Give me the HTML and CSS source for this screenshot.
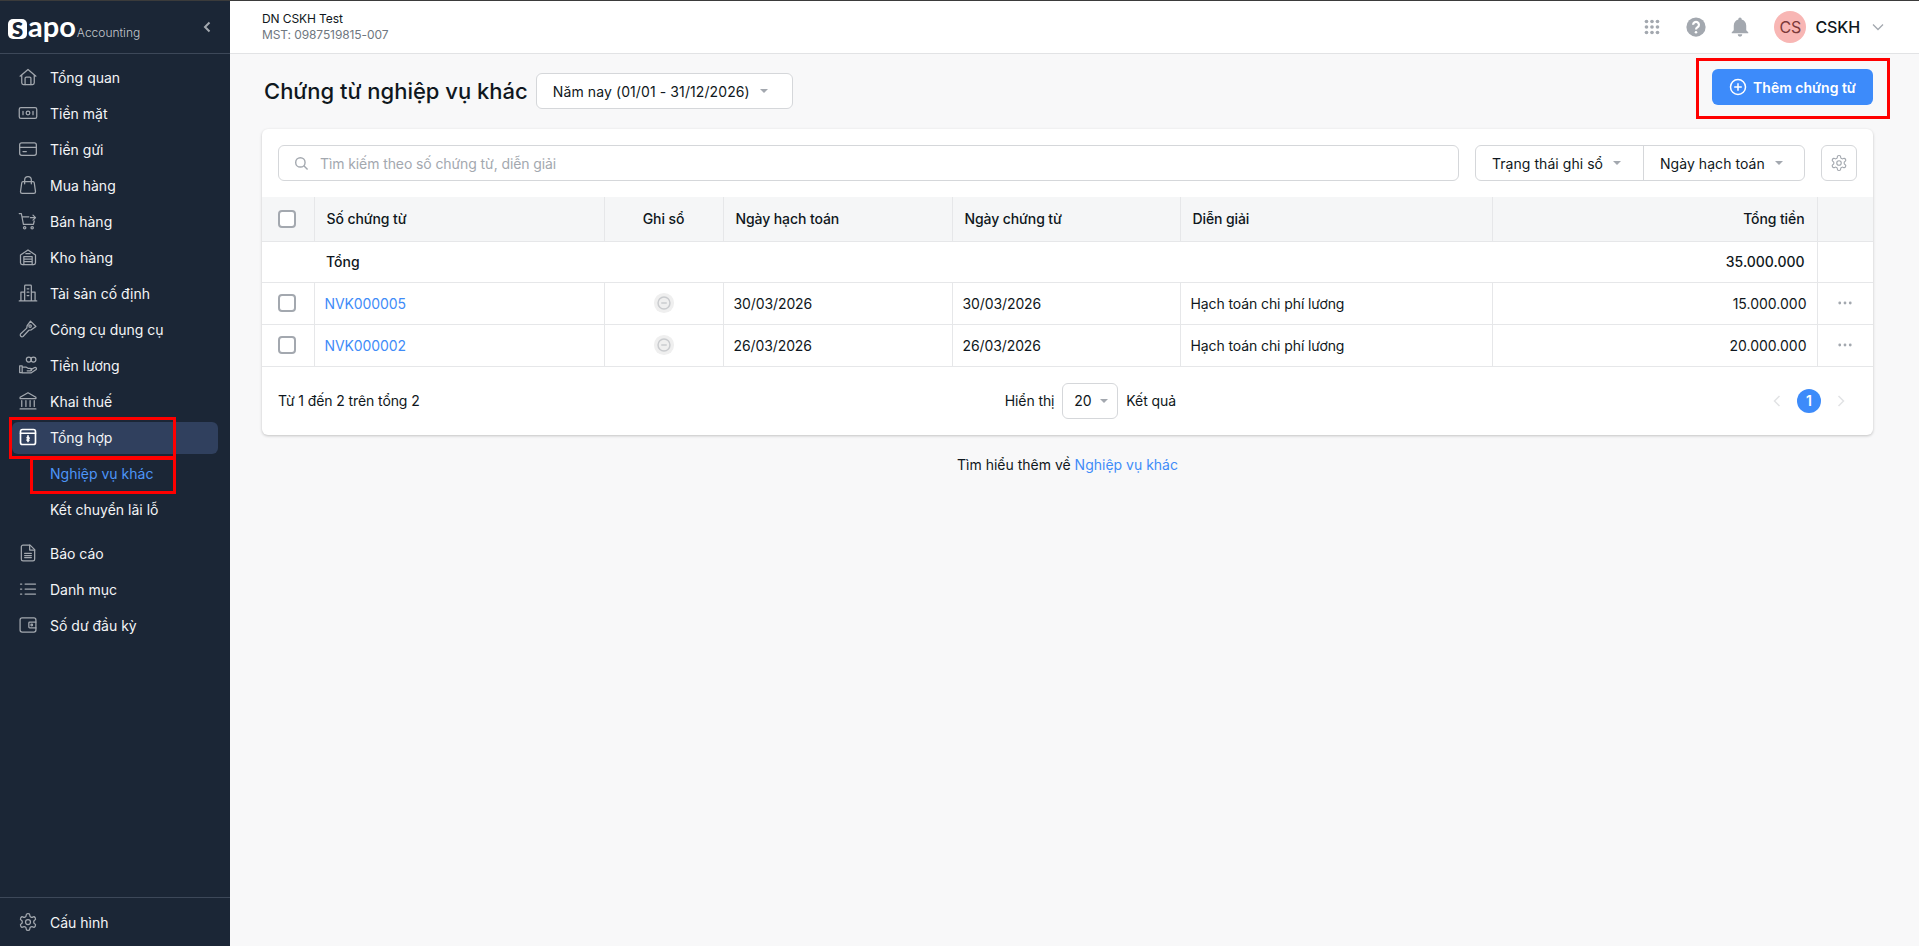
FILE: index.html
```html
<!DOCTYPE html>
<html lang="vi">
<head>
<meta charset="utf-8">
<title>Chứng từ nghiệp vụ khác</title>
<link rel="stylesheet" href="styles.css">
</head>
<body>
<svg class="defs" width="0" height="0" aria-hidden="true">
  <symbol id="gear" viewBox="0 0 24 24">
    <path d="M12.22 2h-.44a2 2 0 0 0-2 2v.18a2 2 0 0 1-1 1.73l-.43.25a2 2 0 0 1-2 0l-.15-.08a2 2 0 0 0-2.73.73l-.22.38a2 2 0 0 0 .73 2.73l.15.1a2 2 0 0 1 1 1.72v.51a2 2 0 0 1-1 1.74l-.15.09a2 2 0 0 0-.73 2.73l.22.38a2 2 0 0 0 2.73.73l.15-.08a2 2 0 0 1 2 0l.43.25a2 2 0 0 1 1 1.73V20a2 2 0 0 0 2 2h.44a2 2 0 0 0 2-2v-.18a2 2 0 0 1 1-1.73l.43-.25a2 2 0 0 1 2 0l.15.08a2 2 0 0 0 2.73-.73l.22-.39a2 2 0 0 0-.73-2.73l-.15-.08a2 2 0 0 1-1-1.74v-.5a2 2 0 0 1 1-1.74l.15-.09a2 2 0 0 0 .73-2.73l-.22-.38a2 2 0 0 0-2.73-.73l-.15.08a2 2 0 0 1-2 0l-.43-.25a2 2 0 0 1-1-1.73V4a2 2 0 0 0-2-2z"/>
    <circle cx="12" cy="12" r="3"/>
  </symbol>
  <symbol id="status" viewBox="0 0 24 24">
    <circle cx="12" cy="12" r="11" fill="#efefef" stroke="none"/>
    <circle cx="12" cy="12" r="6.5" fill="none" stroke="#c9cbce" stroke-width="1.6"/>
    <path d="M9 12h6" fill="none" stroke="#c9cbce" stroke-width="1.6"/>
  </symbol>
  <symbol id="dots" viewBox="0 0 16 4">
    <circle cx="2" cy="2" r="1.6"/><circle cx="8" cy="2" r="1.6"/><circle cx="14" cy="2" r="1.6"/>
  </symbol>
</svg>
<div class="app">
  <aside class="sidebar">
    <div class="brand">
      <div class="logo"><span class="logo-s">S</span><span class="logo-apo">apo</span><span class="logo-sub">Accounting</span></div>
      <svg class="collapse" viewBox="0 0 10 14"><path d="M7.5 2.5 3 7l4.500 4.500"/></svg>
    </div>
    <nav class="menu">
      <a class="item"><svg class="ico" viewBox="0 0 24 24"><path d="M2.500 11 12 3l9.500 8M4.500 9.500V19a2 2 0 0 0 2 2h11a2 2 0 0 0 2-2V9.500"/><path d="M8.500 21v-7.500a1.500 1.500 0 0 1 1.500-1.500h4a1.500 1.500 0 0 1 1.500 1.500V21"/></svg>Tổng quan</a>
      <a class="item"><svg class="ico" viewBox="0 0 24 24"><rect x="1.500" y="5.500" width="21" height="13" rx="2"/><circle cx="12" cy="12" r="2.200"/><path d="M6 10v4M18 10v4"/></svg>Tiền mặt</a>
      <a class="item"><svg class="ico" viewBox="0 0 24 24"><rect x="2" y="4.500" width="20" height="15" rx="2.500"/><path d="M2 10h20M6 15h4"/></svg>Tiền gửi</a>
      <a class="item"><svg class="ico" viewBox="0 0 24 24"><path d="M6 8h12a1.500 1.500 0 0 1 1.500 1.300L21 20a2 2 0 0 1-2 2H5a2 2 0 0 1-2-2L4.500 9.300A1.500 1.500 0 0 1 6 8z"/><path d="M8 10.500V6a4 4 0 0 1 8 0v4.500"/></svg>Mua hàng</a>
      <a class="item"><svg class="ico" viewBox="0 0 24 24"><path d="M1.500 3H4l2.500 13h12l1-4M5 7h8"/><path d="M17 5l3 3-3 3M14 8h6" transform="translate(1 0)"/><circle cx="8" cy="20" r="1.400"/><circle cx="17" cy="20" r="1.400"/></svg>Bán hàng</a>
      <a class="item"><svg class="ico" viewBox="0 0 24 24"><path d="M3 9.500 12 3.500l9 6V19a2 2 0 0 1-2 2H5a2 2 0 0 1-2-2z"/><path d="M7 21v-9.500h10V21M7 14.500h10M7 17.500h10M9.500 8h5"/></svg>Kho hàng</a>
      <a class="item"><svg class="ico" viewBox="0 0 24 24"><path d="M1.500 21.500h21M8 21.500V3.500a1 1 0 0 1 1-1h6a1 1 0 0 1 1 1v18M8 11H3.500v10.500M16 11h4.500v10.500"/><path d="M11 7h2M11 11h2M11 15h2"/></svg>Tài sản cố định</a>
      <a class="item"><svg class="ico" viewBox="0 0 24 24"><path d="M15 2.500 21.500 9l-5.500 4-3 .5L6 21a2.200 2.200 0 0 1-3-3l7.500-7 .5-3z"/><circle cx="14.500" cy="8.500" r="1.500"/></svg>Công cụ dụng cụ</a>
      <a class="item"><svg class="ico" viewBox="0 0 24 24"><circle cx="13" cy="5.500" r="3"/><circle cx="18.500" cy="5.500" r="3"/><path d="M2 13h3v8H2zM5 14.500h4.500l2.500 1.500h3a1.500 1.500 0 0 1 0 3H11M15.500 17.500l4.500-2.500a1.600 1.600 0 0 1 1.800 2.500L15.500 21.500H5"/></svg>Tiền lương</a>
      <a class="item"><svg class="ico" viewBox="0 0 24 24"><path d="M12 2 2.500 7.500v1.500h19V7.500zM4.500 11.500v7M9.500 11.500v7M14.500 11.500v7M19.500 11.500v7M2.500 21.500h19"/></svg>Khai thuế</a>
      <a class="item active"><svg class="ico" viewBox="0 0 24 24"><rect x="3" y="3" width="18" height="18" rx="2.500"/><path d="M3 7.500h18M12 10.500v7"/><path d="M10.500 12.500h3v2h-3M10.500 16h3" stroke-width="1.200"/></svg>Tổng hợp</a>
      <a class="item sub current">Nghiệp vụ khác</a>
      <a class="item sub">Kết chuyển lãi lỗ</a>
      <a class="item spaced"><svg class="ico" viewBox="0 0 24 24"><path d="M6 2.500h8.500L20 8v11.500a2 2 0 0 1-2 2H6a2 2 0 0 1-2-2v-15a2 2 0 0 1 2-2z"/><path d="M14 2.500V8.500h6M8 12.500h8M8 15h8M8 17.500h8"/></svg>Báo cáo</a>
      <a class="item"><svg class="ico" viewBox="0 0 24 24"><path d="M8.500 6H21M8.500 12H21M8.500 18H21M3 6h1.500M3 12h1.500M3 18h1.500"/></svg>Danh mục</a>
      <a class="item"><svg class="ico" viewBox="0 0 24 24"><rect x="2.500" y="3.500" width="19" height="17" rx="2.500"/><path d="M21.500 8.500H14a1 1 0 0 0-1 1v5a1 1 0 0 0 1 1h7.500"/><circle cx="16.500" cy="12" r="1"/></svg>Số dư đầu kỳ</a>
    </nav>
    <div class="side-foot">
      <a class="item"><svg class="ico"><use href="#gear"/></svg>Cấu hình</a>
    </div>
  </aside>
  <div class="main">
    <header class="topbar">
      <div class="org">
        <div class="org-name">DN CSKH Test</div>
        <div class="org-tax">MST: 0987519815-007</div>
      </div>
      <div class="top-actions">
        <svg class="top-ico" viewBox="0 0 24 24"><g class="fill-gray"><circle cx="6" cy="6" r="2"/><circle cx="12" cy="6" r="2"/><circle cx="18" cy="6" r="2"/><circle cx="6" cy="12" r="2"/><circle cx="12" cy="12" r="2"/><circle cx="18" cy="12" r="2"/><circle cx="6" cy="18" r="2"/><circle cx="12" cy="18" r="2"/><circle cx="18" cy="18" r="2"/></g></svg>
        <svg class="top-ico" viewBox="0 0 24 24"><circle class="fill-gray" cx="12" cy="12" r="10.500"/><path class="q-mark" d="M8.800 9.500a3.200 3.200 0 1 1 4.800 2.800c-1 .6-1.600 1.200-1.600 2.400"/><circle class="fill-white" cx="12" cy="17.800" r="1.400"/></svg>
        <svg class="top-ico" viewBox="0 0 24 24"><path class="fill-gray" d="M12 1.500a1.800 1.800 0 0 1 1.800 1.800v.6c3 .8 5 3.300 5 6.600v5l2.200 2.300v1H3v-1l2.200-2.300v-5c0-3.300 2-5.800 5-6.600v-.6A1.800 1.800 0 0 1 12 1.500zM9.500 20h5a2.500 2.500 0 0 1-5 0z"/></svg>
        <div class="user">
          <span class="avatar">CS</span>
          <span class="user-name">CSKH</span>
          <svg class="user-chev" viewBox="0 0 12 8"><path d="M1 1.500 6 6.500l5-5"/></svg>
        </div>
      </div>
    </header>
    <main class="content">
      <div class="page-head">
        <div class="page-title-wrap">
          <h1 class="page-title">Chứng từ nghiệp vụ khác</h1>
          <div class="select date-select">Năm nay (01/01 - 31/12/2026)<i class="caret"></i></div>
        </div>
        <button class="btn-primary"><svg class="plus" viewBox="0 0 18 18"><circle cx="9" cy="9" r="7.500"/><path d="M9 5.200v7.600M5.200 9h7.600"/></svg>Thêm chứng từ</button>
      </div>
      <section class="card">
        <div class="toolbar">
          <label class="search">
            <svg class="search-ico" viewBox="0 0 16 16"><circle cx="6.800" cy="6.800" r="5"/><path d="m10.500 10.500 4 4"/></svg>
            <input class="search-input" type="text" placeholder="Tìm kiếm theo số chứng từ, diễn giải">
          </label>
          <div class="filters">
            <div class="filter filter-status">Trạng thái ghi sổ<i class="caret"></i></div>
            <div class="filter filter-date">Ngày hạch toán<i class="caret"></i></div>
          </div>
          <div class="gear-btn"><svg class="gear-ico"><use href="#gear"/></svg></div>
        </div>
        <table class="grid">
          <colgroup>
            <col class="c1"><col class="c2"><col class="c3"><col class="c4"><col class="c5"><col class="c6"><col class="c7"><col class="c8">
          </colgroup>
          <thead>
            <tr>
              <th class="check"><span class="box"></span></th>
              <th>Số chứng từ</th>
              <th class="center">Ghi sổ</th>
              <th>Ngày hạch toán</th>
              <th>Ngày chứng từ</th>
              <th>Diễn giải</th>
              <th class="right">Tổng tiền</th>
              <th></th>
            </tr>
          </thead>
          <tbody>
            <tr class="total">
              <td class="no-line"></td>
              <td class="total-label" colspan="5">Tổng</td>
              <td class="right total-sum">35.000.000</td>
              <td></td>
            </tr>
            <tr>
              <td class="check"><span class="box"></span></td>
              <td><a class="link">NVK000005</a></td>
              <td class="center"><svg class="status-ico"><use href="#status"/></svg></td>
              <td>30/03/2026</td>
              <td>30/03/2026</td>
              <td>Hạch toán chi phí lương</td>
              <td class="right amount">15.000.000</td>
              <td class="center"><svg class="dots-ico"><use href="#dots"/></svg></td>
            </tr>
            <tr>
              <td class="check"><span class="box"></span></td>
              <td><a class="link">NVK000002</a></td>
              <td class="center"><svg class="status-ico"><use href="#status"/></svg></td>
              <td>26/03/2026</td>
              <td>26/03/2026</td>
              <td>Hạch toán chi phí lương</td>
              <td class="right amount">20.000.000</td>
              <td class="center"><svg class="dots-ico"><use href="#dots"/></svg></td>
            </tr>
          </tbody>
        </table>
        <div class="card-foot">
          <div>Từ 1 đến 2 trên tổng 2</div>
          <div class="page-size">
            <span>Hiển thị</span>
            <div class="select size-select">20<i class="caret"></i></div>
            <span>Kết quả</span>
          </div>
          <div class="pager">
            <span class="pager-arrow"><svg viewBox="0 0 10 14"><path d="M7.500 2 2.500 7l5 5"/></svg></span>
            <span class="pager-num">1</span>
            <span class="pager-arrow"><svg viewBox="0 0 10 14"><path d="M2.500 2l5 5-5 5"/></svg></span>
          </div>
        </div>
      </section>
      <p class="learn">Tìm hiểu thêm về <a class="link">Nghiệp vụ khác</a></p>
    </main>
  </div>
  <div class="mark mark-group"></div>
  <div class="mark mark-sub"></div>
  <div class="mark mark-btn"></div>
</div>
</body>
</html>
```

FILE: styles.css
```css
* { box-sizing: border-box; }
html, body { margin: 0; height: 100%; }
body {
  font-family: Inter, "Noto Sans", sans-serif;
  font-size: 14px;
  letter-spacing: -.1px;
  color: #0f1720;
  overflow: hidden;
}
.defs { position: absolute; }
.app {
  position: relative;
  display: flex;
  height: 946px;
  border-top: 1px solid #3b3b3b;
  background: #f8f8f9;
}

/* Sidebar */
.sidebar {
  width: 230px;
  flex: none;
  display: flex;
  flex-direction: column;
  background: #1b2636;
  color: #f4f5f6;
}
.brand {
  height: 53px;
  flex: none;
  display: flex;
  align-items: center;
  justify-content: space-between;
  padding: 0 18px 0 8px;
  border-bottom: 1px solid #3d4859;
}
.logo { display: flex; align-items: baseline; color: #fff; letter-spacing: 0; }
.logo-s {
  width: 19px;
  height: 20px;
  border-radius: 5px;
  background: #fff;
  color: #1b2636;
  font: 800 20px/20px Lato, sans-serif;
  text-align: center;
}
.logo-apo { font: 700 29px/24px Lato, sans-serif; margin-left: 1px; }
.logo-sub { font: 300 12px/14px Inter, sans-serif; color: #c4c8cd; margin-left: 1px; }
.collapse { width: 10px; height: 14px; fill: none; stroke: #a3a8af; stroke-width: 2; }
.menu { flex: 1; padding-top: 5px; }
.item {
  display: flex;
  align-items: center;
  gap: 12px;
  height: 36px;
  padding-left: 18px;
  font-weight: 400;
  letter-spacing: 0;
  color: #f4f5f6;
}
.ico {
  width: 20px;
  height: 20px;
  flex: none;
  fill: none;
  stroke: #a3a8af;
  stroke-width: 1.500;
  stroke-linecap: round;
  stroke-linejoin: round;
}
.active { position: relative; z-index: 0; }
.active::before {
  content: "";
  position: absolute;
  z-index: -1;
  left: 12px;
  right: 12px;
  top: 3px;
  bottom: 1px;
  border-radius: 6px;
  background: #30405e;
}
.active .ico { stroke: #fff; stroke-width: 2; }
.sub { padding-left: 50px; }
.current { color: #4d95f8; }
.spaced { margin-top: 8px; }
.side-foot { height: 49px; flex: none; padding-top: 6px; border-top: 1px solid #3d4859; }

/* Main */
.main { flex: 1; min-width: 0; display: flex; flex-direction: column; }
.topbar {
  height: 53px;
  flex: none;
  display: flex;
  align-items: center;
  justify-content: space-between;
  padding: 0 35px 0 32px;
  background: #fff;
  border-bottom: 1px solid #e2e3e5;
}
.org { font-size: 12px; line-height: 16px; }
.org-tax { color: #6f7780; }
.top-actions { display: flex; align-items: center; gap: 20px; }
.top-ico { width: 22px; height: 22px; margin: 0 1px; }
.fill-gray { fill: #a3a8af; }
.fill-white { fill: #fff; }
.q-mark { fill: none; stroke: #fff; stroke-width: 2.400; }
.user { display: flex; align-items: center; margin-left: 2px; }
.avatar {
  width: 32px;
  height: 32px;
  border-radius: 50%;
  background: #f8b6b4;
  color: #7b3a3a;
  font-size: 16px;
  line-height: 32px;
  text-align: center;
}
.user-name { margin-left: 9px; font-size: 16px; font-weight: 500; }
.user-chev { width: 12px; height: 8px; margin-left: 12px; fill: none; stroke: #a3a8af; stroke-width: 1.300; }
.content { flex: 1; padding: 15px 46px 0 32px; }
.page-head { display: flex; justify-content: space-between; align-items: center; height: 36px; margin-bottom: 24px; }
.page-title-wrap { display: flex; align-items: center; margin-top: 8px; }
.page-title { margin: 0 8px 0 2px; font-size: 22px; line-height: 28px; font-weight: 500; color: #0f1720; letter-spacing: 0; }
.select {
  display: flex;
  align-items: center;
  height: 36px;
  border: 1px solid #d5d7da;
  border-radius: 6px;
  background: #fff;
}
.date-select { padding-left: 16px; width: 257px; gap: 10px; letter-spacing: .1px; }
.caret {
  width: 0;
  height: 0;
  border-left: 4.500px solid transparent;
  border-right: 4.500px solid transparent;
  border-top: 4.500px solid #a3a8af;
}
.btn-primary {
  display: flex;
  align-items: center;
  justify-content: center;
  gap: 6px;
  width: 161px;
  height: 36px;
  padding: 0;
  border: 0;
  border-radius: 6px;
  background: #3d8bfa;
  color: #fff;
  font: 600 14px Inter, sans-serif;
}
.plus { width: 18px; height: 18px; fill: none; stroke: #fff; stroke-width: 1.500; }

/* Card */
.card {
  background: #fff;
  border-radius: 6px;
  box-shadow: 0 1px 3px rgba(0, 0, 0, .22);
}
.toolbar { display: flex; padding: 16px; gap: 16px; }
.search {
  flex: 1;
  display: flex;
  align-items: center;
  gap: 11px;
  height: 36px;
  padding: 0 15px;
  border: 1px solid #d5d7da;
  border-radius: 6px;
}
.search-ico { width: 15px; height: 15px; flex: none; fill: none; stroke: #a3a8af; stroke-width: 1.500; }
.search-input {
  flex: 1;
  border: 0;
  outline: 0;
  padding: 0;
  font: 14px Inter, sans-serif;
  letter-spacing: -.1px;
  color: #0f1720;
  background: transparent;
}
.search-input::placeholder { color: #a3a8af; opacity: 1; }
.filters { display: flex; height: 36px; border: 1px solid #d5d7da; border-radius: 6px; }
.filter { display: flex; align-items: center; gap: 10px; padding-left: 16px; letter-spacing: .05px; }
.filter-status { width: 168px; border-right: 1px solid #d5d7da; }
.filter-date { width: 160px; }
.gear-btn {
  width: 36px;
  height: 36px;
  display: flex;
  align-items: center;
  justify-content: center;
  border: 1px solid #d5d7da;
  border-radius: 6px;
}
.gear-ico { width: 18px; height: 18px; fill: none; stroke: #a3a8af; stroke-width: 1.500; }

/* Table */
.grid { width: 100%; table-layout: fixed; border-collapse: collapse; }
.c1 { width: 52px; } .c2 { width: 290px; } .c3 { width: 119px; } .c4 { width: 229px; }
.c5 { width: 228px; } .c6 { width: 312px; } .c7 { width: 325px; } .c8 { width: 56px; }
.grid th {
  height: 44px;
  padding: 0 12px;
  text-align: left;
  font-weight: 500;
  background: #f5f6f7;
  border-bottom: 1px solid #e6e7e9;
  border-left: 1px solid #e6e7e9;
}
.grid td {
  height: 42px;
  padding: 0 10px;
  border-bottom: 1px solid #e6e7e9;
  border-left: 1px solid #e6e7e9;
}
.grid th:first-child, .grid td:first-child { border-left: 0; }
.grid .total td { height: 41px; border-left: 0; font-weight: 500; letter-spacing: 0; }
.grid .total td:last-child { border-left: 1px solid #e6e7e9; }
.grid .total-label { padding-left: 12px; }
.grid .total-sum { padding-right: 12px; }
.grid .amount { letter-spacing: 0; }
.center { text-align: center; }
.grid .center { text-align: center; }
.grid .right { text-align: right; }
.check { text-align: center; }
.grid .check { padding: 0 0 0 0; text-align: left; padding-left: 16px; }
.box {
  display: block;
  width: 18px;
  height: 18px;
  border: 2px solid #a3a8af;
  border-radius: 4px;
  background: #fff;
}
.link { color: #3f8cf8; }
.status-ico { display: block; width: 22px; height: 22px; margin: 0 auto; }
.dots-ico { display: block; width: 14px; height: 4px; margin: 0 auto; fill: #a3a8af; }
.card-foot {
  display: flex;
  align-items: center;
  justify-content: space-between;
  padding: 16px 16px 16px;
}
.page-size { display: flex; align-items: center; gap: 8px; }
.size-select { width: 56px; padding-left: 11px; gap: 8px; }
.pager { display: flex; align-items: center; gap: 4px; }
.pager-arrow { width: 32px; display: flex; justify-content: center; }
.pager-arrow svg { width: 10px; height: 14px; fill: none; stroke: #e2e3e5; stroke-width: 1.500; }
.pager-num {
  width: 24px;
  height: 24px;
  border-radius: 50%;
  background: #3d8bfa;
  color: #fff;
  font-weight: 600;
  line-height: 24px;
  text-align: center;
}
.learn { margin: 20px 0 0; line-height: 20px; text-align: center; letter-spacing: 0; }

/* Red annotation frames drawn over the screen */
.mark { position: absolute; border: 3px solid #f00; pointer-events: none; }
.mark-group { left: 9px; top: 416px; width: 167px; height: 42px; }
.mark-sub { left: 30px; top: 456px; width: 146px; height: 37px; }
.mark-btn { left: 1696px; top: 57px; width: 194px; height: 61px; }
```
